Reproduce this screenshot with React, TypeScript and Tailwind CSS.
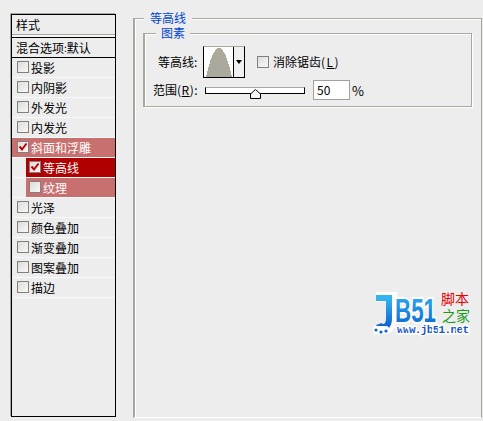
import React from 'react';

const FONT = "font-['Noto_Sans_CJK_SC','Liberation_Sans',sans-serif]";

const styleRows = [
  { label: '投影' },
  { label: '内阴影' },
  { label: '外发光' },
  { label: '内发光' },
  { label: '斜面和浮雕', checked: true, tone: 'parent' },
  { label: '等高线', checked: true, tone: 'active', sub: true },
  { label: '纹理', tone: 'parent', sub: true },
  { label: '光泽' },
  { label: '颜色叠加' },
  { label: '渐变叠加' },
  { label: '图案叠加' },
  { label: '描边' },
];

const CheckBox: React.FC<{ checked?: boolean }> = ({ checked }) => (
  <span className="relative block h-[12px] w-[12px] shrink-0 -translate-y-[1px] border border-[#808080] bg-gradient-to-br from-[#dcdcd8] to-[#f8f8f8]">
    {checked && (
      <svg viewBox="0 0 10 10" className="absolute left-0 top-0 h-[10px] w-[10px]">
        <path d="M1.5 4.5 L4 7.5 L8.5 1.5" fill="none" stroke="#c00000" strokeWidth="2" />
      </svg>
    )}
  </span>
);

const StyleRow: React.FC<{ label: string; checked?: boolean; tone?: string; sub?: boolean }> = ({ label, checked, tone, sub }) => (
  <div className={`h-[20px] border-b border-[#fafafa] ${sub ? 'pl-[14px]' : ''}`}>
    <div
      className={`flex h-[19px] items-center gap-[2px] ${sub ? 'pl-[3px]' : 'pl-[5px]'} ${
        tone === 'active' ? 'bg-[#b10000] text-white' : tone === 'parent' ? 'bg-[#c87070] text-white' : 'text-black'
      }`}
    >
      <CheckBox checked={checked} />
      <span className="text-[12px] leading-none">{label}</span>
    </div>
  </div>
);

// jb51 logo, viewBox origin is page (370, 286)
const Watermark = () => (
  <svg viewBox="0 0 110 54" className="h-[54px] w-[110px]">
    <defs>
      <linearGradient id="jb" x1="0" y1="0" x2="0" y2="1">
        <stop offset="0" stopColor="#35b4f2" />
        <stop offset="1" stopColor="#0a63cc" />
      </linearGradient>
    </defs>
    <path d="M6 11 H22 V32 Q22 43 13 43 Q9 43 8 39" fill="none" stroke="#ffffff" strokeWidth="10" />
    <path d="M6 12 H22 M19 12 V32 Q19 41 13 41 Q10 41 9 38" fill="none" stroke="url(#jb)" strokeWidth="6" />
    <rect x="3" y="40" width="16" height="8" rx="3" fill="#ffffff" />
    <circle cx="6" cy="44" r="1.6" fill="#0a63cc" />
    <circle cx="11" cy="46" r="1.6" fill="#0a63cc" />
    <circle cx="16" cy="45" r="1.6" fill="#0a63cc" />
    <text
      x="25"
      y="36"
      fontFamily="'Liberation Sans', sans-serif"
      fontWeight="700"
      fontSize="34"
      fill="url(#jb)"
      stroke="#ffffff"
      strokeWidth="4"
      paintOrder="stroke"
      textLength="41"
      lengthAdjust="spacingAndGlyphs"
    >
      B51
    </text>
    <text x="71" y="18" fontFamily="'Noto Sans CJK SC', sans-serif" fontSize="14" fill="#ea0000">脚本</text>
    <text x="72" y="35" fontFamily="'Noto Sans CJK SC', sans-serif" fontSize="14" fill="#1a9a1a">之家</text>
    <text
      x="27"
      y="47"
      fontFamily="'Liberation Mono', monospace"
      fontSize="11"
      fontWeight="700"
      fill="#1656c8"
      stroke="#ffffff"
      strokeWidth="3"
      paintOrder="stroke"
      textLength="72"
    >
      www.jb51.net
    </text>
  </svg>
);

export default function App() {
  return (
    <div className={`relative flex h-[421px] w-[483px] items-start overflow-hidden bg-[#ededed] pl-[11px] pt-[14px] ${FONT}`}>
      {/* style list */}
      <div className="flex h-[403px] w-[105px] shrink-0 flex-col border border-black shadow-[-1px_-1px_0_#a8a89c]">
        <div className="flex h-[19px] items-center pl-[4px] text-[12px] leading-none text-black">样式</div>
        <div className="h-[3px] border-t border-[#a8a89c] bg-[#f4f4f4]" />
        <div className="flex h-[21px] items-center border-y border-black pl-[4px] text-[12px] leading-none text-black">
          混合选项<span className="text-[10px]">:</span>默认
        </div>
        {styleRows.map((r) => (
          <StyleRow key={r.label} {...r} />
        ))}
      </div>

      {/* contour options */}
      <div className="relative ml-[17px] mt-[4px] h-[400px] w-[349px] shrink-0 border-x border-t border-b border-x-[#a8a89c] border-t-[#a8a89c] border-b-white border-l-2 pl-[8px] pt-[14px] shadow-[inset_1px_1px_0_#fff]">
        <span className="absolute left-[9px] top-[-9px] bg-[#ededed] px-[6px] text-[12px] leading-[16px] text-[#0046d5]">等高线</span>
        <div className="relative h-[74px] w-[329px] border border-[#a8a89c] border-l-2 shadow-[inset_1px_1px_0_#fff,1px_1px_0_#fff]">
          <span className="absolute left-[11px] top-[-9px] bg-[#ededed] px-[5px] text-[12px] leading-[16px] text-[#0046d5]">图素</span>
          <div className="flex items-center pl-[13px] pt-[12px]">
            <span className="w-[45px] text-[12px] leading-none text-black">等高线:</span>
            <div className="flex h-[32px] w-[42px] border border-black border-t-[#a8a89c] bg-white">
              <svg viewBox="0 0 29 30" shapeRendering="crispEdges" className="h-[30px] w-[29px]">
                <path d="M2 30 Q15 -28 28 30 Z" fill="#aba99b" />
              </svg>
              <div className="flex flex-1 items-center justify-center border-l border-black bg-[#f0f0f0]">
                <span className="h-0 w-0 border-x-[3px] border-t-[4px] border-x-transparent border-t-black" />
              </div>
            </div>
            <span className="ml-[12px] mr-[4px] h-[12px] w-[12px] border border-[#808080] bg-gradient-to-br from-[#dcdcd8] to-[#f8f8f8]" />
            <span className="text-[12px] leading-none text-black">
              消除锯齿<span className="tracking-[1.5px]">(<span className="underline">L</span>)</span>
            </span>
          </div>
          <div className="mt-[2px] flex items-center pl-[8px]">
            <span className="w-[52px] text-[12px] leading-none text-black">
              范围<span className="tracking-[0.5px]">(<span className="underline">R</span>):</span>
            </span>
            <div className="relative mt-[1px] h-[7px] w-[100px] border border-black border-t-[#a8a89c] bg-white">
              <svg viewBox="0 0 11 10" className="absolute left-[44px] top-[1px] h-[10px] w-[11px]">
                <path d="M0.5 9.5 V5 L5.5 0.5 L10.5 5 V9.5 Z" fill="#f4f4f0" stroke="#000000" />
              </svg>
            </div>
            <div className="ml-[8px] flex h-[20px] w-[37px] items-center border border-[#a0a0a0] bg-white pl-[3px] text-[12px] text-black">50</div>
            <span className="ml-[2px] text-[13px] leading-none text-black">%</span>
          </div>
        </div>
      </div>

      {/* site watermark */}
      <div className="absolute left-[370px] top-[286px]">
        <Watermark />
      </div>
    </div>
  );
}
